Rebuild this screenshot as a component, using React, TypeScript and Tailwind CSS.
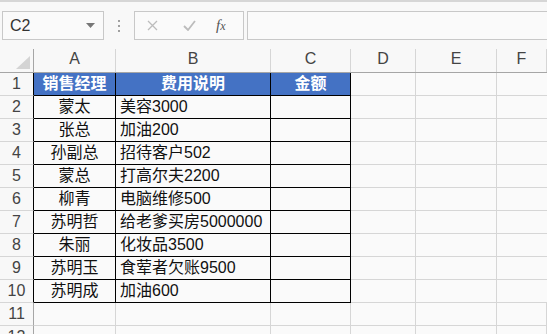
const cols = [
  { key: "A", w: "w-[82px]" },
  { key: "B", w: "w-[155px]" },
  { key: "C", w: "w-[80px]" },
  { key: "D", w: "w-[65px]" },
  { key: "E", w: "w-[81px]" },
  { key: "F", w: "flex-1" },
];

const rows: [string, string][] = [
  ["蒙太", "美容3000"],
  ["张总", "加油200"],
  ["孙副总", "招待客户502"],
  ["蒙总", "打高尔夫2200"],
  ["柳青", "电脑维修500"],
  ["苏明哲", "给老爹买房5000000"],
  ["朱丽", "化妆品3500"],
  ["苏明玉", "食荤者欠账9500"],
  ["苏明成", "加油600"],
];

const font = "font-['Liberation_Sans','Noto_Sans_CJK_SC',sans-serif]";

function Toolbar() {
  return (
    <div className="flex h-[49px] items-start border-t-2 border-[#d6d6d6] bg-[#f8f8f8] pt-[9px]">
      {/* name box */}
      <div className="ml-[2px] flex h-[29px] w-[102px] items-center justify-between border border-[#c8c8c8] bg-[#fafafa] pl-[7px] pr-[8px]">
        <span className="text-[16px] text-[#333]">C2</span>
        <svg width="9" height="5" viewBox="0 0 9 5">
          <path d="M0 0h9L4.5 5z" fill="#777" />
        </svg>
      </div>
      <div className="ml-[14px] mt-[9px] flex flex-col gap-[3px]">
        <span className="h-[2px] w-[2px] bg-[#a0a0a0]" />
        <span className="h-[2px] w-[2px] bg-[#a0a0a0]" />
        <span className="h-[2px] w-[2px] bg-[#a0a0a0]" />
      </div>
      {/* formula buttons */}
      <div className="ml-[14px] flex h-[29px] w-[110px] items-center border border-[#c8c8c8] bg-[#fafafa]">
        <svg className="ml-[12px]" width="11" height="11" viewBox="0 0 11 11">
          <path d="M1 1l9 9M10 1l-9 9" stroke="#bcbcbc" strokeWidth="1.3" />
        </svg>
        <svg className="ml-[25px]" width="13" height="11" viewBox="0 0 13 11">
          <path d="M1 6l4 4 7-9" stroke="#bcbcbc" strokeWidth="1.8" fill="none" />
        </svg>
        <span className="ml-[20px] font-['Liberation_Serif',serif] text-[15px] italic text-[#555]">
          f<span className="text-[12px]">x</span>
        </span>
      </div>
      <div className="ml-[3px] h-[29px] flex-1 border-y border-l border-[#c8c8c8] bg-[#fafafa]" />
    </div>
  );
}

export default function App() {
  return (
    <div className={`h-[334px] w-[547px] overflow-hidden bg-[#fafafa] ${font}`}>
      <Toolbar />

      {/* column header */}
      <div className="flex h-[24px] border-b border-[#a6a6a6] bg-[#f8f8f8] text-[16px] text-[#444]">
        <div className="relative w-[34px] border-r border-[#a6a6a6]">
          <svg className="absolute left-[16px] top-[7px]" width="14" height="13" viewBox="0 0 14 13">
            <path d="M14 0v13H0z" fill="#d4d4d4" />
          </svg>
        </div>
        {cols.map((c) => (
          <div
            key={c.key}
            className={`${c.w} flex items-end justify-center border-r border-[#d6d6d6] pb-[1px]`}
          >
            {c.key}
          </div>
        ))}
      </div>

      {/* row 1 : table head */}
      <div className="flex h-[23px] text-[16px]">
        <div className="flex w-[34px] items-center justify-center border-b border-r border-b-[#d6d6d6] border-r-black bg-[#f8f8f8] text-[#444]">
          1
        </div>
        {["销售经理", "费用说明", "金额"].map((t, i) => (
          <div
            key={t}
            className={`${cols[i].w} flex items-center justify-center border-b border-r border-black bg-[#4472c4] font-bold text-white`}
          >
            {t}
          </div>
        ))}
        <div className="w-[65px] border-b border-r border-[#d6d6d6]" />
        <div className="w-[81px] border-b border-r border-[#d6d6d6]" />
        <div className="flex-1 border-b border-[#d6d6d6]" />
      </div>

      {rows.map(([name, desc], i) => (
        <div key={i} className="flex h-[23px] text-[16px] text-[#111]">
          <div className="flex w-[34px] items-center justify-center border-b border-r border-b-[#d6d6d6] border-r-black bg-[#f8f8f8] text-[#444]">
            {i + 2}
          </div>
          <div className="flex w-[82px] items-center justify-center border-b border-r border-black">
            {name}
          </div>
          <div className="flex w-[155px] items-center border-b border-r border-black pl-[4px]">
            {desc}
          </div>
          <div className="w-[80px] border-b border-r border-black" />
          <div className="w-[65px] border-b border-r border-[#d6d6d6]" />
          <div className="w-[81px] border-b border-r border-[#d6d6d6]" />
          <div className="flex-1 border-b border-[#d6d6d6]" />
        </div>
      ))}

      {[11, 12].map((n) => (
        <div key={n} className="flex h-[23px] text-[16px]">
          <div className="flex w-[34px] items-center justify-center border-b border-r border-b-[#d6d6d6] border-r-[#a6a6a6] bg-[#f8f8f8] text-[#444]">
            {n}
          </div>
          {cols.map((c) => (
            <div key={c.key} className={`${c.w} border-b border-r border-[#d6d6d6]`} />
          ))}
        </div>
      ))}
    </div>
  );
}
